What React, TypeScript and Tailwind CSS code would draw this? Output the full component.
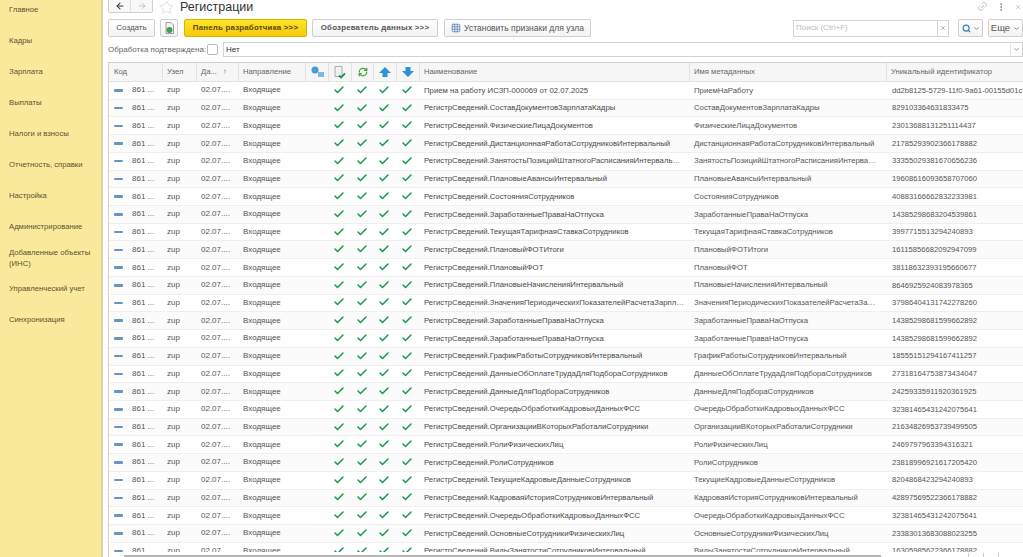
import React from "react";
import { Check, ArrowLeft, ArrowRight, Star, Search, ChevronDown, X, Link2, MoreVertical, RefreshCw, Grid3x3 } from "lucide-react";

const nav: string[] = [
  "Главное",
  "Кадры",
  "Зарплата",
  "Выплаты",
  "Налоги и взносы",
  "Отчетность, справки",
  "Настройка",
  "Администрирование",
  "Добавленные объекты (ИНС)",
  "Управленческий учет",
  "Синхронизация",
];

const R = "РегистрСведений.";
const rows: [string, string, string][] = [
  ["Прием на работу ИСЗП-000069 от 02.07.2025", "ПриемНаРаботу", "dd2b8125-5729-11f0-9a61-00155d01c7a3"],
  [R + "СоставДокументовЗарплатаКадры", "СоставДокументовЗарплатаКадры", "829103364631833475"],
  [R + "ФизическиеЛицаДокументов", "ФизическиеЛицаДокументов", "23013688131251114437"],
  [R + "ДистанционнаяРаботаСотрудниковИнтервальный", "ДистанционнаяРаботаСотрудниковИнтервальный", "21785293902366178882"],
  [R + "ЗанятостьПозицийШтатногоРасписанияИнтервальный", "ЗанятостьПозицийШтатногоРасписанияИнтервальный", "33355029381670656236"],
  [R + "ПлановыеАвансыИнтервальный", "ПлановыеАвансыИнтервальный", "19608616093658707060"],
  [R + "СостоянияСотрудников", "СостоянияСотрудников", "40883166662832233981"],
  [R + "ЗаработанныеПраваНаОтпуска", "ЗаработанныеПраваНаОтпуска", "14385298683204539861"],
  [R + "ТекущаяТарифнаяСтавкаСотрудников", "ТекущаяТарифнаяСтавкаСотрудников", "3997715513294240893"],
  [R + "ПлановыйФОТИтоги", "ПлановыйФОТИтоги", "16115856682092947099"],
  [R + "ПлановыйФОТ", "ПлановыйФОТ", "38118632393195660677"],
  [R + "ПлановыеНачисленияИнтервальный", "ПлановыеНачисленияИнтервальный", "8646925924083978365"],
  [R + "ЗначенияПериодическихПоказателейРасчетаЗарплаты", "ЗначенияПериодическихПоказателейРасчетаЗарплаты", "37986404131742278260"],
  [R + "ЗаработанныеПраваНаОтпуска", "ЗаработанныеПраваНаОтпуска", "14385298681599662892"],
  [R + "ЗаработанныеПраваНаОтпуска", "ЗаработанныеПраваНаОтпуска", "14385298681599662892"],
  [R + "ГрафикРаботыСотрудниковИнтервальный", "ГрафикРаботыСотрудниковИнтервальный", "18555151294167411257"],
  [R + "ДанныеОбОплатеТрудаДляПодбораСотрудников", "ДанныеОбОплатеТрудаДляПодбораСотрудников", "27318164753873434047"],
  [R + "ДанныеДляПодбораСотрудников", "ДанныеДляПодбораСотрудников", "24259335911920361925"],
  [R + "ОчередьОбработкиКадровыхДанныхФСС", "ОчередьОбработкиКадровыхДанныхФСС", "32381465431242075641"],
  [R + "ОрганизацииВКоторыхРаботалиСотрудники", "ОрганизацииВКоторыхРаботалиСотрудники", "21634826953739499505"],
  [R + "РолиФизическихЛиц", "РолиФизическихЛиц", "2469797963394316321"],
  [R + "РолиСотрудников", "РолиСотрудников", "23818996921617205420"],
  [R + "ТекущиеКадровыеДанныеСотрудников", "ТекущиеКадровыеДанныеСотрудников", "8204868423294240893"],
  [R + "КадроваяИсторияСотрудниковИнтервальный", "КадроваяИсторияСотрудниковИнтервальный", "42897569522366178882"],
  [R + "ОчередьОбработкиКадровыхДанныхФСС", "ОчередьОбработкиКадровыхДанныхФСС", "32381465431242075641"],
  [R + "ОсновныеСотрудникиФизическихЛиц", "ОсновныеСотрудникиФизическихЛиц", "23383013683088023255"],
  [R + "ВидыЗанятостиСотрудниковИнтервальный", "ВидыЗанятостиСотрудниковИнтервальный", "16305985622366178882"],
];

const grid =
  "grid grid-cols-[54px_34px_42px_67px_23px_23px_22px_23px_23px_270px_197px_137px]";
const btn =
  "flex items-center justify-center h-[18px] rounded-[2px] border border-[#cfcfcf] bg-gradient-to-b from-white to-[#f3f3f3] text-[#555]";

function Arrow({ down }: { down?: boolean }) {
  return (
    <svg width="12" height="10" viewBox="0 0 12 10">
      <path
        d={down ? "M3.500 0h5v4H12L6 10 0 4h3.500z" : "M6 0l6 6H8.500v4h-5V6H0z"}
        fill="#2b93d6"
      />
    </svg>
  );
}

function H({ children }: { children?: React.ReactNode }) {
  return (
    <div className="flex items-center justify-center h-full min-w-0 border-r border-[#e2e2e2]">
      {children}
    </div>
  );
}

function HT({ children, last }: { children: React.ReactNode; last?: boolean }) {
  return (
    <div
      className={
        "flex items-center pl-[4px] h-full min-w-0 whitespace-nowrap overflow-hidden " +
        (last ? "" : "border-r border-[#e2e2e2]")
      }
    >
      {children}
    </div>
  );
}

function Ok() {
  return (
    <div className="flex items-center justify-center pr-[3px] -mt-[1px]">
      <Check size={12} strokeWidth={3} className="text-[#17994a]" />
    </div>
  );
}

export default function App() {
  return (
    <div className="flex w-[1023px] h-[557px] overflow-hidden bg-white font-['Liberation_Sans',Arial,sans-serif] text-[8px] text-[#555]">
      <aside className="w-[103px] shrink-0 h-full bg-[#fbe99b] border-r-2 border-[#d9d3a8] overflow-hidden">
        <div className="-mt-[5px] pl-[9px] pr-[4px] text-[7.7px] leading-[10.5px] text-[#5c5230]">
          {nav.map((t) => (
            <div key={t} className="flex items-center h-[31px]">
              {t}
            </div>
          ))}
        </div>
      </aside>

      <main className="flex-1 min-w-0 flex flex-col pl-[5px]">
        <div className="h-[19px] shrink-0 flex items-start">
          <div className="flex w-[45px] h-[14px] -mt-px border border-[#cfcfcf] rounded-b-[2px] bg-[#f8f8f8]">
            <div className="flex-1 flex items-center justify-center border-r border-[#dedede]">
              <ArrowLeft size={10} strokeWidth={2.5} className="text-[#333]" />
            </div>
            <div className="flex-1 flex items-center justify-center">
              <ArrowRight size={10} strokeWidth={2} className="text-[#bbb]" />
            </div>
          </div>
          <Star size={15} strokeWidth={1} className="ml-[6px] text-[#cfcfcf]" />
          <div className="ml-[6px] text-[12.5px] leading-[14px] text-[#333]">Регистрации</div>
          <div className="ml-auto flex items-center h-[13px] gap-[8px] pr-[1px] text-[#999]">
            <Link2 size={11} strokeWidth={1.2} className="-rotate-45" />
            <MoreVertical size={10} strokeWidth={2} className="text-[#777]" />
            <X size={8} strokeWidth={1.5} />
          </div>
        </div>

        <div className="h-[18px] shrink-0 flex items-center">
          <div className={btn + " w-[47px]"}>Создать</div>
          <div className={btn + " w-[18px] ml-[5px]"}>
            <svg width="9" height="12" viewBox="0 0 9 12">
              <path d="M1 .5h5L8.500 3v8.500H1z" fill="#f4f4f4" stroke="#888" strokeWidth="0.8" />
              <circle cx="4.500" cy="8" r="3" fill="#3fa14a" />
            </svg>
          </div>
          <div className="flex items-center justify-center h-[18px] w-[123px] ml-[6px] rounded-[2px] border border-[#d4b400] bg-gradient-to-b from-[#fde427] to-[#f7c90a] text-[7.9px] font-bold tracking-[0.2px] text-[#5a4a10]">
            Панель разработчика &gt;&gt;&gt;
          </div>
          <div className={btn + " w-[126px] ml-[5px] text-[7.85px] font-bold tracking-[0.2px]"}>
            Обозреватель данных &gt;&gt;&gt;
          </div>
          <div className={btn + " w-[147px] ml-[6px] gap-[3px] text-[8.5px]"}>
            <Grid3x3 size={10} className="text-[#5b87b8]" />
            Установить признаки для узла
          </div>
          <div className="flex h-[17px] w-[156px] ml-[202px] border border-[#d4d4d4] bg-white">
            <div className="flex-1 flex items-center pl-[2px] text-[#c0c0c0]">Поиск (Ctrl+F)</div>
            <div className="w-[11px] flex items-center justify-center border-l border-[#d4d4d4]">
              <X size={6} strokeWidth={2} className="text-[#777]" />
            </div>
          </div>
          <div className={btn + " w-[25px] ml-[9px] gap-[2px]"}>
            <Search size={9} strokeWidth={3} className="text-[#2f7fc0]" />
            <ChevronDown size={7} strokeWidth={2.5} className="text-[#666]" />
          </div>
          <div className={btn + " w-[35px] ml-[5px] gap-[3px]"}>
            <span className="text-[9.5px]">Еще</span>
            <ChevronDown size={7} strokeWidth={2.5} className="text-[#666]" />
          </div>
        </div>

        <div className="h-[15px] mt-[5px] shrink-0 flex items-center">
          <span className="w-[99px] shrink-0 whitespace-nowrap text-[#666]">Обработка подтверждена:</span>
          <div className="w-[11px] h-[11px] shrink-0 rounded-[2px] border border-[#b8b8b8] bg-white" />
          <div className="flex flex-1 h-[15px] ml-[5px] border border-[#d4d4d4]">
            <div className="flex-1 flex items-center pl-[2px] text-[#333]">Нет</div>
            <div className="w-[12px] flex items-center justify-center border-l border-[#e4e4e4]">
              <ChevronDown size={7} strokeWidth={2.5} className="text-[#666]" />
            </div>
          </div>
        </div>

        <div className="mt-[5px] flex-1 min-h-0 flex flex-col overflow-hidden border-t border-l border-[#d2d2d2]">
          <div className={grid + " h-[19px] shrink-0 bg-[#f6f6f6] border-b border-[#e2e2e2] text-[#666] text-[7.7px]"}>
            <HT>
              <span className="pl-[1px]">Код</span>
            </HT>
            <HT>Узел</HT>
            <HT>
              Да...<span className="ml-[6px]">↑</span>
            </HT>
            <HT>Направление</HT>
            <H>
              <svg width="13" height="12" viewBox="0 0 13 12">
                <circle cx="4" cy="4" r="3.500" fill="#4a9ad4" />
                <rect x="7" y="6" width="6" height="5" fill="#7db8e0" />
              </svg>
            </H>
            <H>
              <svg width="12" height="13" viewBox="0 0 12 13">
                <path d="M1 .5h7v10H1z" fill="#f2f2f2" stroke="#999" strokeWidth="0.8" />
                <path d="M5 9.500l2 2 4-4" fill="none" stroke="#17994a" strokeWidth="1.8" />
              </svg>
            </H>
            <H>
              <RefreshCw size={10} strokeWidth={3} className="text-[#3da83d]" />
            </H>
            <H>
              <Arrow />
            </H>
            <H>
              <Arrow down />
            </H>
            <HT>Наименование</HT>
            <HT>Имя метаданных</HT>
            <HT last>Уникальный идентификатор</HT>
          </div>

          <div className="flex-1 min-h-0 overflow-hidden">
            {rows.map((r, i) => (
              <div
                key={i}
                className={
                  grid +
                  " h-[17.72px] items-center border-b border-[#efefef] whitespace-nowrap text-[#555] " +
                  (i % 2 ? "bg-[#fbfbfb]" : "bg-white")
                }
              >
                <div className="flex items-center">
                  <span className="ml-[5px] w-[9px] h-[2.5px] rounded-[1px] bg-[#6a94c0]" />
                  <span className="ml-[9px]">861 ...</span>
                </div>
                <div className="pl-[4px]">zup</div>
                <div className="pl-[4px]">02.07....</div>
                <div className="pl-[4px]">Входящее</div>
                <div />
                <Ok />
                <Ok />
                <Ok />
                <Ok />
                <div className="pl-[4px] pr-[6px] overflow-hidden text-ellipsis text-[7.75px] text-[#4a4a4a]">{r[0]}</div>
                <div className="pl-[4px] pr-[8px] overflow-hidden text-ellipsis text-[7.75px]">{r[1]}</div>
                <div className="pl-[5px] overflow-hidden text-[7.65px]">{r[2]}</div>
              </div>
            ))}
          </div>
          <div className="h-[5px] shrink-0 flex items-end bg-white pl-[15px]">
            <div className="w-[757px] h-[2px] bg-[#b5b5b5]" />
            <div className="w-[1px] h-[4px] ml-[87px] bg-[#cfcfcf]" />
            <div className="w-[1px] h-[4px] ml-[14px] bg-[#cfcfcf]" />
            <div className="w-[1px] h-[4px] ml-[14px] bg-[#cfcfcf]" />
          </div>
        </div>
      </main>
    </div>
  );
}
